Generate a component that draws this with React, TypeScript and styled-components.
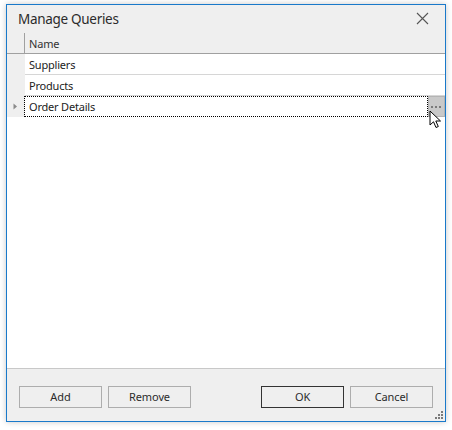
import React from "react";
import styled, { createGlobalStyle } from "styled-components";

const Global = createGlobalStyle`
  html, body { margin: 0; padding: 0; background: #ffffff; }
  body { font-family: "Segoe UI", "Noto Sans", "Open Sans", sans-serif; }
`;

const Page = styled.div`
  width: 452px;
  height: 430px;
  padding: 4px 6px 8px 6px;
  box-sizing: border-box;
`;

const Window = styled.div`
  width: 440px;
  height: 418px;
  box-sizing: border-box;
  border: 1px solid #1979ca;
  background: #efefef;
  box-shadow: 0 0 6px rgba(0, 0, 0, 0.22);
  display: flex;
  flex-direction: column;
  position: relative;
`;

const TitleBar = styled.div`
  height: 28px;
  flex: none;
  display: flex;
  align-items: center;
  justify-content: space-between;
  padding: 0 16px 0 11px;
`;

const Title = styled.div`
  font-family: "Segoe UI", "Noto Sans", sans-serif;
  font-size: 13.5px;
  color: #2b2b2b;
  letter-spacing: -0.3px;
  margin-top: 0px;
`;

const CloseBtn = styled.div`
  width: 13px;
  height: 13px;
  display: flex;
  align-items: center;
  justify-content: center;
  margin-top: -2px;
`;

const Grid = styled.div`
  height: 335px;
  flex: none;
  background: #ffffff;
  border-bottom: 1px solid #c8c8c8;
  display: flex;
  flex-direction: column;
`;

const HeaderRow = styled.div`
  display: flex;
  height: 20px;
  background: #efefef;
  border-bottom: 1px solid #a0a0a0;
`;

const Row = styled.div`
  display: flex;
  height: 21px;
`;

const Indicator = styled.div<{ $header?: boolean }>`
  width: 17px;
  flex: none;
  background: #efefef;
  border-right: 1px solid ${(p) => (p.$header ? "#a0a0a0" : "#efefef")};
  display: flex;
  align-items: center;
  justify-content: center;
`;

const HeaderCell = styled.div`
  flex: 1;
  font-size: 11px;
  letter-spacing: -0.2px;
  color: #333;
  padding-left: 4px;
  display: flex;
  align-items: center;
  margin-top: 0px;
`;

const Cell = styled.div`
  flex: 1;
  display: flex;
  align-items: center;
  font-size: 11px;
  letter-spacing: -0.2px;
  color: #222;
  padding-left: 4px;
  box-sizing: border-box;
  border-bottom: 1px solid #d6d6d6;
`;

const FocusBox = styled.div`
  flex: 1;
  height: 21px;
  display: flex;
  align-items: center;
  padding-left: 4px;
  box-sizing: border-box;
  border: 1px dotted #000;
  margin-left: -1px;
  font-size: 11px;
  letter-spacing: -0.2px;
  color: #222;
`;

const EllipsisBtn = styled.div`
  width: 17px;
  height: 21px;
  box-sizing: border-box;
  background: #c9c9c9;
  border: 1px solid #b4b4b4;
  display: flex;
  align-items: center;
  justify-content: center;
  flex: none;
`;

const Cursor = styled.svg`
  position: absolute;
  left: 422px;
  top: 105px;
`;

const Footer = styled.div`
  flex: 1;
  display: flex;
  align-items: center;
  justify-content: space-between;
  padding: 3px 12px 0 12px;
`;

const Group = styled.div`
  display: flex;
  gap: 6px;
`;

const Button = styled.div<{ $default?: boolean }>`
  width: 83px;
  height: 22px;
  box-sizing: border-box;
  border: 1px solid ${(p) => (p.$default ? "#333333" : "#adadad")};
  background: #efefef;
  display: flex;
  align-items: center;
  justify-content: center;
  font-size: 11px;
  letter-spacing: -0.1px;
  color: #2b2b2b;
`;

const Grip = styled.svg`
  position: absolute;
  right: 1px;
  bottom: 1px;
`;

export default function App() {
  return (
    <>
      <Global />
      <Page>
        <Window>
          <TitleBar>
            <Title>Manage Queries</Title>
            <CloseBtn>
              <svg width="13" height="13" viewBox="0 0 13 13">
                <path d="M1 1 L12 12 M12 1 L1 12" stroke="#555" strokeWidth="1.1" />
              </svg>
            </CloseBtn>
          </TitleBar>
          <Grid>
            <HeaderRow>
              <Indicator $header />
              <HeaderCell>Name</HeaderCell>
            </HeaderRow>
            <Row>
              <Indicator />
              <Cell>Suppliers</Cell>
            </Row>
            <Row>
              <Indicator />
              <Cell>Products</Cell>
            </Row>
            <Row>
              <Indicator>
                <svg width="5" height="7" viewBox="0 0 5 7">
                  <path d="M0.5 0.5 L4 3.5 L0.5 6.5 Z" fill="#8a8a8a" />
                </svg>
              </Indicator>
              <FocusBox>Order Details</FocusBox>
              <EllipsisBtn>
                <svg width="11" height="4" viewBox="0 0 11 4">
                  <rect x="0" y="1" width="2" height="2" fill="#7a7a7a" />
                  <rect x="4" y="1" width="2" height="2" fill="#7a7a7a" />
                  <rect x="8" y="1" width="2" height="2" fill="#7a7a7a" />
                </svg>
              </EllipsisBtn>
            </Row>
          </Grid>
          <Footer>
            <Group>
              <Button>Add</Button>
              <Button>Remove</Button>
            </Group>
            <Group>
              <Button $default>OK</Button>
              <Button>Cancel</Button>
            </Group>
          </Footer>
          <Cursor width="14" height="20" viewBox="0 0 14 20">
            <path
              d="M1 1 L1 15 L4.5 11.8 L7 17.5 L9.3 16.5 L6.8 11 L11.5 11 Z"
              fill="#ffffff"
              stroke="#000"
              strokeWidth="1"
              strokeLinejoin="miter"
            />
          </Cursor>
          <Grip width="9" height="9" viewBox="0 0 9 9">
            <rect x="6" y="0" width="2" height="2" fill="#7a7a7a" />
            <rect x="3" y="3" width="2" height="2" fill="#7a7a7a" />
            <rect x="6" y="3" width="2" height="2" fill="#7a7a7a" />
            <rect x="0" y="6" width="2" height="2" fill="#7a7a7a" />
            <rect x="3" y="6" width="2" height="2" fill="#7a7a7a" />
            <rect x="6" y="6" width="2" height="2" fill="#7a7a7a" />
          </Grip>
        </Window>
      </Page>
    </>
  );
}
